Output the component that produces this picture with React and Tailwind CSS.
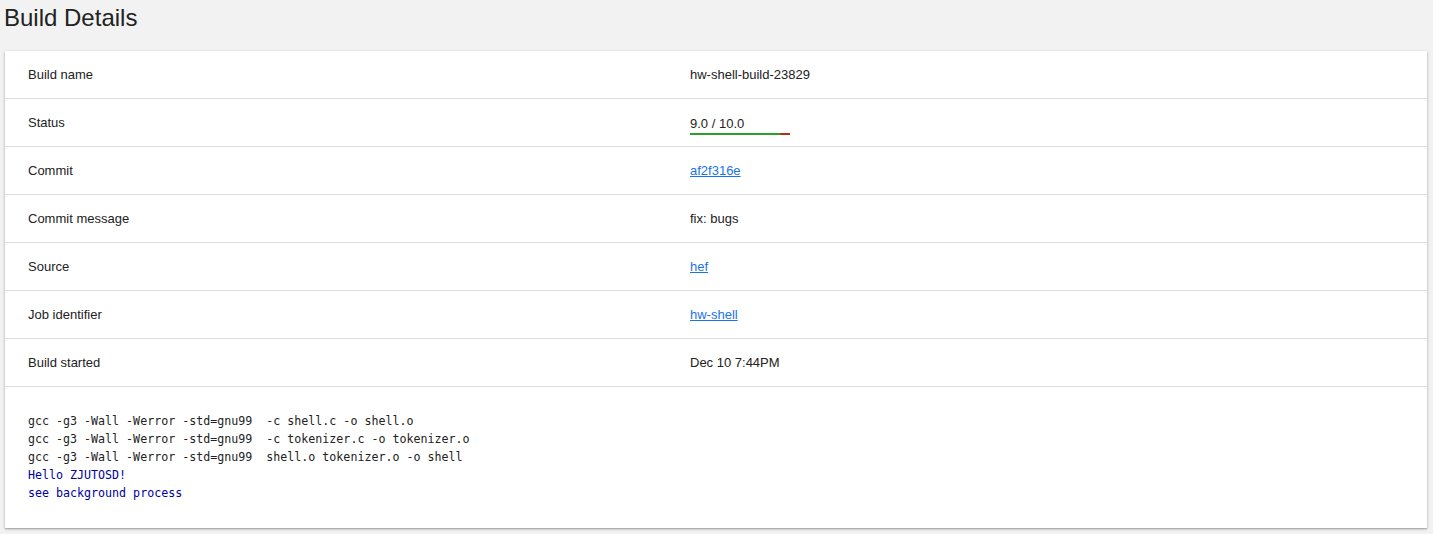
import React from 'react'

const rows = [
  { label: 'Build name', value: 'hw-shell-build-23829' },
  { label: 'Status', status: { score: 9.0, max: 10.0 } },
  { label: 'Commit', value: 'af2f316e', link: true },
  { label: 'Commit message', value: 'fix: bugs' },
  { label: 'Source', value: 'hef', link: true },
  { label: 'Job identifier', value: 'hw-shell', link: true },
  { label: 'Build started', value: 'Dec 10 7:44PM' },
]

const log = [
  { text: 'gcc -g3 -Wall -Werror -std=gnu99  -c shell.c -o shell.o' },
  { text: 'gcc -g3 -Wall -Werror -std=gnu99  -c tokenizer.c -o tokenizer.o' },
  { text: 'gcc -g3 -Wall -Werror -std=gnu99  shell.o tokenizer.o -o shell' },
  { text: 'Hello ZJUTOSD!', out: true },
  { text: 'see background process', out: true },
]

function Status({ score, max }) {
  const pct = (score / max) * 100
  return (
    <div className="inline-block w-[100px] pt-[11px]">
      <div className="leading-[15px]">{score.toFixed(1)} / {max.toFixed(1)}</div>
      <div className="flex h-[2px] mt-[2px]">
        <div className="bg-[#2ca02c] h-full" style={{ width: `${pct}%` }} />
        <div className="bg-[#b5310f] h-full flex-1" />
      </div>
    </div>
  )
}

export default function App() {
  return (
    <div className="min-h-[534px] bg-[#f2f2f2] font-['Liberation_Sans',Arial,sans-serif] text-[#222] pt-[4px] px-[5px] pb-[6px]">
      <h1 className="text-[24px] leading-[28px] text-[#222] -ml-px mb-[19px]">Build Details</h1>
      <div className="bg-white w-[1422px] shadow-[0_1px_3px_rgba(0,0,0,0.25),0_1px_1px_rgba(0,0,0,0.15)]">
        {rows.map((r) => (
          <div key={r.label} className="flex items-center h-[48px] border-b border-[#e0e0e0] text-[13px]">
            <div className="w-[685px] pl-[23px]">{r.label}</div>
            <div>
              {r.status ? (
                <Status {...r.status} />
              ) : r.link ? (
                <a href="#" className="text-[#1a73e8] underline">{r.value}</a>
              ) : (
                r.value
              )}
            </div>
          </div>
        ))}
        <div className="pl-[23px] pt-[25px] pb-[26px] font-['DejaVu_Sans_Mono',monospace] text-[11.65px] leading-[18px]">
          {log.map((l, i) => (
            <div key={i} className={`whitespace-pre ${l.out ? 'text-[#0000a0]' : 'text-[#222]'}`}>{l.text}</div>
          ))}
        </div>
      </div>
    </div>
  )
}
